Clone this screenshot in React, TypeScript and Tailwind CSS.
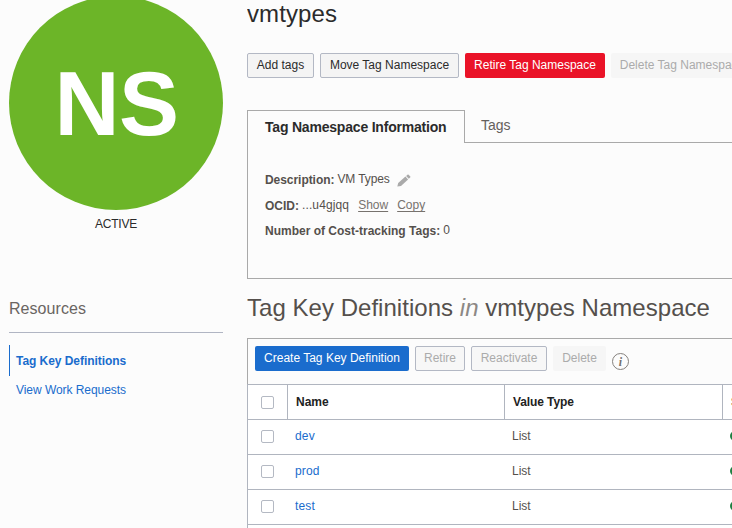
import type { ReactNode } from "react";

const base =
  "flex h-[25px] shrink-0 items-center justify-center whitespace-nowrap rounded-[2px] text-[12px] leading-[23px] pb-px";

const styles = {
  normal: "border border-[#b3b8c4] bg-[#f4f4f4] text-[#2b2b2b]",
  danger: "bg-[#ea1328] text-white",
  primary: "bg-[#1a6ccd] text-white",
  disabled: "border border-[#b3b8c4] bg-[#f7f7f7] text-[#ababab]",
  ghost: "bg-[#f6f6f6] text-[#ababab]",
};

function Button({ kind, width, children }: { kind: keyof typeof styles; width: string; children: ReactNode }) {
  return <button className={`${base} ${styles[kind]} ${width}`}>{children}</button>;
}

function Checkbox() {
  return <span className="block size-[13px] rounded-[2px] border border-[#b4b9c3] bg-white" />;
}

function Row({ name }: { name: string }) {
  return (
    <div className="flex h-[35px] items-center border-b border-[#b0b5bf] pb-px text-[12px] leading-[14px]">
      <div className="flex w-[40px] shrink-0 justify-center pr-px">
        <Checkbox />
      </div>
      <div className="w-[217px] shrink-0 pb-px pl-[7px] tracking-[0.15px] text-[#1a6ccd]">{name}</div>
      <div className="w-[218px] shrink-0 pb-px pl-[7px] text-[#55504c]">List</div>
      <div className="shrink-0 pb-px pl-[7px]">
        <div className="size-[10px] rounded-full bg-[#1f8043]" />
      </div>
    </div>
  );
}

function Sidebar() {
  return (
    <aside className="ml-[9px] flex w-[214px] shrink-0 flex-col">
      <div className="-mt-[4px] flex size-[214px] shrink-0 items-center justify-center rounded-full bg-[#6cb528] text-[90px] font-bold leading-[100px] text-white">
        <span className="pl-px pt-[2px] tracking-[-0.5px]">NS</span>
      </div>
      <div className="mt-[7px] text-center text-[12px] leading-[14px] tracking-[-0.2px] text-[#2b2b2b]">ACTIVE</div>
      <h2 className="mt-[67px] h-[35px] border-b border-[#b0b5c3] text-[16px] leading-[22px] tracking-[0.05px] text-[#6a6562]">Resources</h2>
      <nav className="mt-[12px] text-[12px] text-[#1a6ccd]">
        <a className="block h-[31px] border-l border-[#1a6ccd] pl-[6px] font-bold leading-[33px] tracking-[-0.05px]">Tag Key Definitions</a>
        <a className="mt-px block pl-[7px] leading-[26px] tracking-[-0.05px]">View Work Requests</a>
      </nav>
    </aside>
  );
}

function Details() {
  return (
    <section className="mt-[32px]">
      <div className="flex h-[33px]">
        <div className="w-[218px] shrink-0 border-l border-r border-t border-[#a9a9a9] pl-[17px] text-[14px] font-bold leading-[32px] tracking-[-0.2px] text-[#2b2b2b]">
          Tag Namespace Information
        </div>
        <div className="grow border-b border-[#a9a9a9] pl-[16px] text-[14px] leading-[30px] text-[#65605c]">Tags</div>
      </div>
      <div className="flex h-[136px] flex-col border-b border-l border-[#a9a9a9] pl-[17px] pt-[24px] text-[12px] text-[#55504c]">
        <div className="flex h-[26px] items-center">
          <b className="tracking-[-0.05px]">Description:</b>
          <span className="ml-[3px] pb-[2px] tracking-[-0.1px]">VM Types</span>
          <svg className="ml-[7px]" width="14" height="13" viewBox="0 0 14 13" fill="#aaa">
            <path d="M0.3 12.6 1.2 8.9 8.4 2.6 11.1 5.4 4 11.9Z" />
            <path d="M9.1 2 10.8 0.6Q11.2 0.3 11.6 0.7L13.3 2.4Q13.7 2.8 13.3 3.2L11.8 4.7Z" />
          </svg>
        </div>
        <div className="flex h-[25px] items-center">
          <b>OCID:</b>
          <span className="ml-[3px] pb-px tracking-[0.12px]">...u4gjqq</span>
          <a className="ml-[9px] pb-px text-[#77726e] underline underline-offset-2">Show</a>
          <a className="ml-[9px] pb-px text-[#77726e] underline underline-offset-2">Copy</a>
        </div>
        <div className="flex h-[26px] items-center">
          <b>Number of Cost-tracking Tags:</b>
          <span className="ml-[3px] pb-[2px]">0</span>
        </div>
      </div>
    </section>
  );
}

function Definitions() {
  return (
    <section>
      <h2 className="mt-[14px] h-[45px] whitespace-nowrap text-[24px] leading-[30px] tracking-[0.035px] text-[#55504c]">
        Tag Key Definitions <i className="text-[#8c8885]">in</i> vmtypes Namespace
      </h2>
      <div className="flex h-[46px] gap-[6px] border-l border-t border-[#a9a9a9] pl-[7px] pt-[7px]">
        <Button kind="primary" width="w-[154px]">Create Tag Key Definition</Button>
        <Button kind="disabled" width="w-[50px]">Retire</Button>
        <Button kind="disabled" width="w-[76px]">Reactivate</Button>
        <Button kind="ghost" width="w-[53px]">Delete</Button>
        <span className="mt-[7px] flex size-[17px] items-center justify-center rounded-full border-[1.5px] border-[#85817d] font-['Liberation_Serif',serif] text-[12px] font-bold italic leading-[14px] text-[#76716d]">
          i
        </span>
      </div>
      <div className="border-l border-t border-[#b0b5bf] bg-white">
        <div className="flex h-[35px] items-stretch border-b border-[#b0b5bf] text-[12px] font-bold leading-[34px] text-[#222]">
          <div className="flex w-[40px] shrink-0 items-center justify-center border-r border-[#b0b5bf]">
            <Checkbox />
          </div>
          <div className="w-[217px] shrink-0 border-r border-[#b0b5bf] pl-[8px]">Name</div>
          <div className="w-[218px] shrink-0 border-r border-[#b0b5bf] pl-[8px] tracking-[-0.1px]">Value Type</div>
          <div className="shrink-0 pl-[8px]">State</div>
        </div>
        <Row name="dev" />
        <Row name="prod" />
        <Row name="test" />
        <div className="h-[10px]" />
      </div>
    </section>
  );
}

export default function App() {
  return (
    <div className="flex h-[528px] w-[732px] gap-[24px] overflow-hidden bg-[#fcfcfc] font-['Liberation_Sans',Arial,sans-serif]">
      <Sidebar />
      <main className="flex min-w-0 grow flex-col overflow-hidden">
        <h1 className="h-[53px] shrink-0 text-[24px] leading-[28px] tracking-[0.1px] text-[#2b2b2b]">vmtypes</h1>
        <div className="flex gap-[6px]">
          <Button kind="normal" width="w-[67px]">Add tags</Button>
          <Button kind="normal" width="w-[139px]">Move Tag Namespace</Button>
          <Button kind="danger" width="w-[140px]">Retire Tag Namespace</Button>
          <Button kind="ghost" width="w-[142px]">Delete Tag Namespace</Button>
        </div>
        <Details />
        <Definitions />
      </main>
    </div>
  );
}
